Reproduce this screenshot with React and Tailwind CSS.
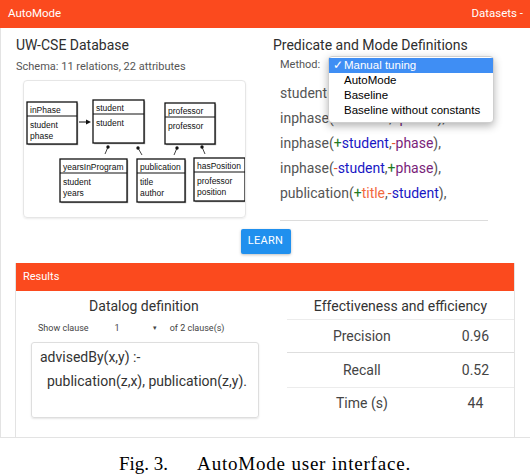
import React from "react";

// colours of the mode tokens
const Plus = () => <span className="text-[#1f7a1f]">+</span>;
const Minus = () => <span className="text-[#e4502a]">-</span>;
const Stu = () => <span className="text-[#1818c4]">student</span>;
const Pha = () => <span className="text-[#7a1f7a]">phase</span>;

const Box = ({ x, y, w, h, title, rows }) => (
  <g>
    <rect x={x + 1.2} y={y + 1.2} width={w} height={h} fill="#9a9a9a" />
    <rect x={x} y={y} width={w} height={h} fill="#fff" stroke="#111" strokeWidth="1.3" />
    <line x1={x} x2={x + w} y1={y + 14} y2={y + 14} stroke="#111" strokeWidth="1" />
    <text x={x + 3} y={y + 11} fontSize="8.5" fill="#111">{title}</text>
    {rows.map((r, i) => (
      <text key={i} x={x + 3} y={y + 26 + i * 11} fontSize="8.5" fill="#111">{r}</text>
    ))}
  </g>
);

const Link = ({ x1, y1, x2, y2 }) => (
  <g>
    <line x1={x1} y1={y1} x2={x2} y2={y2} stroke="#111" strokeWidth="0.8" />
    <circle cx={x2} cy={y2} r="1.7" fill="#111" />
  </g>
);

const Schema = () => (
  <svg width="223" height="138" viewBox="0 0 223 138" className="font-['Liberation_Sans',sans-serif]">
    <Box x={3} y={21} w={50} h={42} title="inPhase" rows={["student", "phase"]} />
    <Box x={69} y={19} w={51} h={43} title="student" rows={["student"]} />
    <Box x={141} y={22} w={50} h={41} title="professor" rows={["professor"]} />
    <Box x={36} y={78} w={67} h={43} title="yearsInProgram" rows={["student", "years"]} />
    <Box x={113} y={78} w={48} h={43} title="publication" rows={["title", "author"]} />
    <Box x={170} y={77} w={51} h={43} title="hasPosition" rows={["professor", "position"]} />
    <line x1="55" y1="41" x2="63" y2="41" stroke="#111" strokeWidth="1" />
    <path d="M62 38.5 L67 41 L62 43.5 Z" fill="#111" />
    <Link x1={81} y1={73} x2={84} y2={66} />
    <Link x1={118} y1={74} x2={114} y2={67} />
    <Link x1={150} y1={74} x2={153} y2={67} />
    <Link x1={181} y1={73} x2={178} y2={66} />
  </svg>
);

const App = () => {
  return (
    <div className="w-[530px] h-[476px] bg-white overflow-hidden font-['Roboto',sans-serif]">

      {/* header */}
      <header className="h-[28px] bg-[#fb4a1e] flex items-center justify-between pl-[8px] pr-[7px] text-white text-[11.5px]">
        <span>AutoMode</span>
        <span>Datasets -</span>
      </header>

      <main className="h-[410px] border-l border-b border-[#e3e3e3] flex flex-col">

        <div className="flex pt-[7px]">
          {/* database */}
          <section className="w-[257px] pl-[15px]">
            <h2 className="text-[14px] leading-[20px] text-[#2e2e2e]">UW-CSE Database</h2>
            <p className="mt-[5px] text-[11px] leading-[14px] text-[#555]">Schema: 11 relations, 22 attributes</p>
            <div className="ml-[7px] mt-[6px] w-[223px] h-[138px] rounded-[4px] border border-[#e6e6e6] shadow-[0_1px_2px_rgba(0,0,0,0.08)] overflow-hidden">
              <Schema />
            </div>
          </section>

          {/* modes */}
          <section className="flex-1 pl-[15px]">
            <h2 className="text-[14px] leading-[20px] text-[#2e2e2e]">Predicate and Mode Definitions</h2>
            <div className="relative mt-[2px] h-[16px] pl-[7px] flex items-center text-[11px] text-[#555]">
              Method:
              <div className="absolute left-[55px] top-[-1px] w-[166px] pt-[1px] pb-[4px] bg-white rounded-[4px] border border-[#cfcfcf] shadow-[0_3px_8px_rgba(0,0,0,0.3)] text-[11.5px] text-black font-['Liberation_Sans',sans-serif] z-10">
                <div className="h-[15px] bg-[#3f8ef4] text-white flex items-center pl-[4px]">
                  <span className="w-[11px]">✓</span>Manual tuning
                </div>
                <div className="h-[15px] flex items-center pl-[15px]">AutoMode</div>
                <div className="h-[15px] flex items-center pl-[15px]">Baseline</div>
                <div className="h-[15px] flex items-center pl-[15px]">Baseline without constants</div>
              </div>
            </div>
            <div className="mt-[8px] ml-[7px] w-[208px] pb-[14px] border-b border-[#dcdcdc] text-[14px] leading-[25px] text-[#555] whitespace-nowrap">
              <div>student(<Plus /><Stu />),</div>
              <div>inphase(<Plus /><Stu />,<Plus /><Pha />),</div>
              <div>inphase(<Plus /><Stu />,<Minus /><Pha />),</div>
              <div>inphase(<Minus /><Stu />,<Plus /><Pha />),</div>
              <div>publication(<Plus /><span className="text-[#f26a3f]">title</span>,<Minus /><Stu />),</div>
            </div>
          </section>
        </div>

        <button className="mt-[8px] mx-auto w-[50px] h-[25px] bg-[#2090ee] text-white text-[11px] tracking-[0.3px] rounded-[2px] shadow-[0_1px_3px_rgba(0,0,0,0.25)]">
          LEARN
        </button>

        {/* results */}
        <div className="mt-[9px] ml-[14px] w-[500px] flex-1 border-x border-[#e3e3e3] flex flex-col">
          <div className="h-[28px] bg-[#fb4a1e] text-white text-[11px] flex items-center pl-[7px]">Results</div>
          <div className="flex flex-1">
            <div className="w-[258px]">
              <h3 className="pt-[5px] text-center text-[14px] leading-[20px] text-[#333]">Datalog definition</h3>
              <div className="mt-[6px] pl-[22px] flex items-center text-[9px] leading-[12px] text-[#444]">
                <span>Show clause</span>
                <span className="ml-[26px]">1</span>
                <span className="ml-[33px] text-[7px]">▾</span>
                <span className="ml-[13px]">of 2 clause(s)</span>
              </div>
              <div className="mt-[8px] ml-[15px] w-[228px] h-[76px] rounded-[3px] border border-[#dedede] shadow-[0_1px_2px_rgba(0,0,0,0.1)] pt-[4px] text-[14px] text-[#333]">
                <div className="pl-[8px] leading-[20px]">advisedBy(x,y) :-</div>
                <div className="pl-[15px] mt-[4px] leading-[20px]">publication(z,x), publication(z,y).</div>
              </div>
            </div>

            <div className="ml-[15px] w-[229px] text-[14px] text-[#444]">
              <div className="h-[29px] pt-[5px] text-center leading-[20px] text-[#333] border-b border-[#ececec]">Effectiveness and efficiency</div>
              <div className="h-[33px] flex items-center border-b border-[#dedede]">
                <span className="w-[150px] text-center">Precision</span>
                <span className="flex-1 text-center">0.96</span>
              </div>
              <div className="h-[35px] flex items-center border-b border-[#ececec]">
                <span className="w-[150px] text-center">Recall</span>
                <span className="flex-1 text-center">0.52</span>
              </div>
              <div className="h-[31px] flex items-center">
                <span className="w-[150px] text-center">Time (s)</span>
                <span className="flex-1 text-center">44</span>
              </div>
            </div>
          </div>
        </div>
      </main>

      {/* caption */}
      <p className="pt-[15px] flex justify-center text-[19px] leading-[22px] text-black font-['Liberation_Serif',serif]">
        <span>Fig. 3.</span>
        <span className="ml-[29px] tracking-[0.8px]">AutoMode user interface.</span>
      </p>
    </div>
  );
};

export default App;
